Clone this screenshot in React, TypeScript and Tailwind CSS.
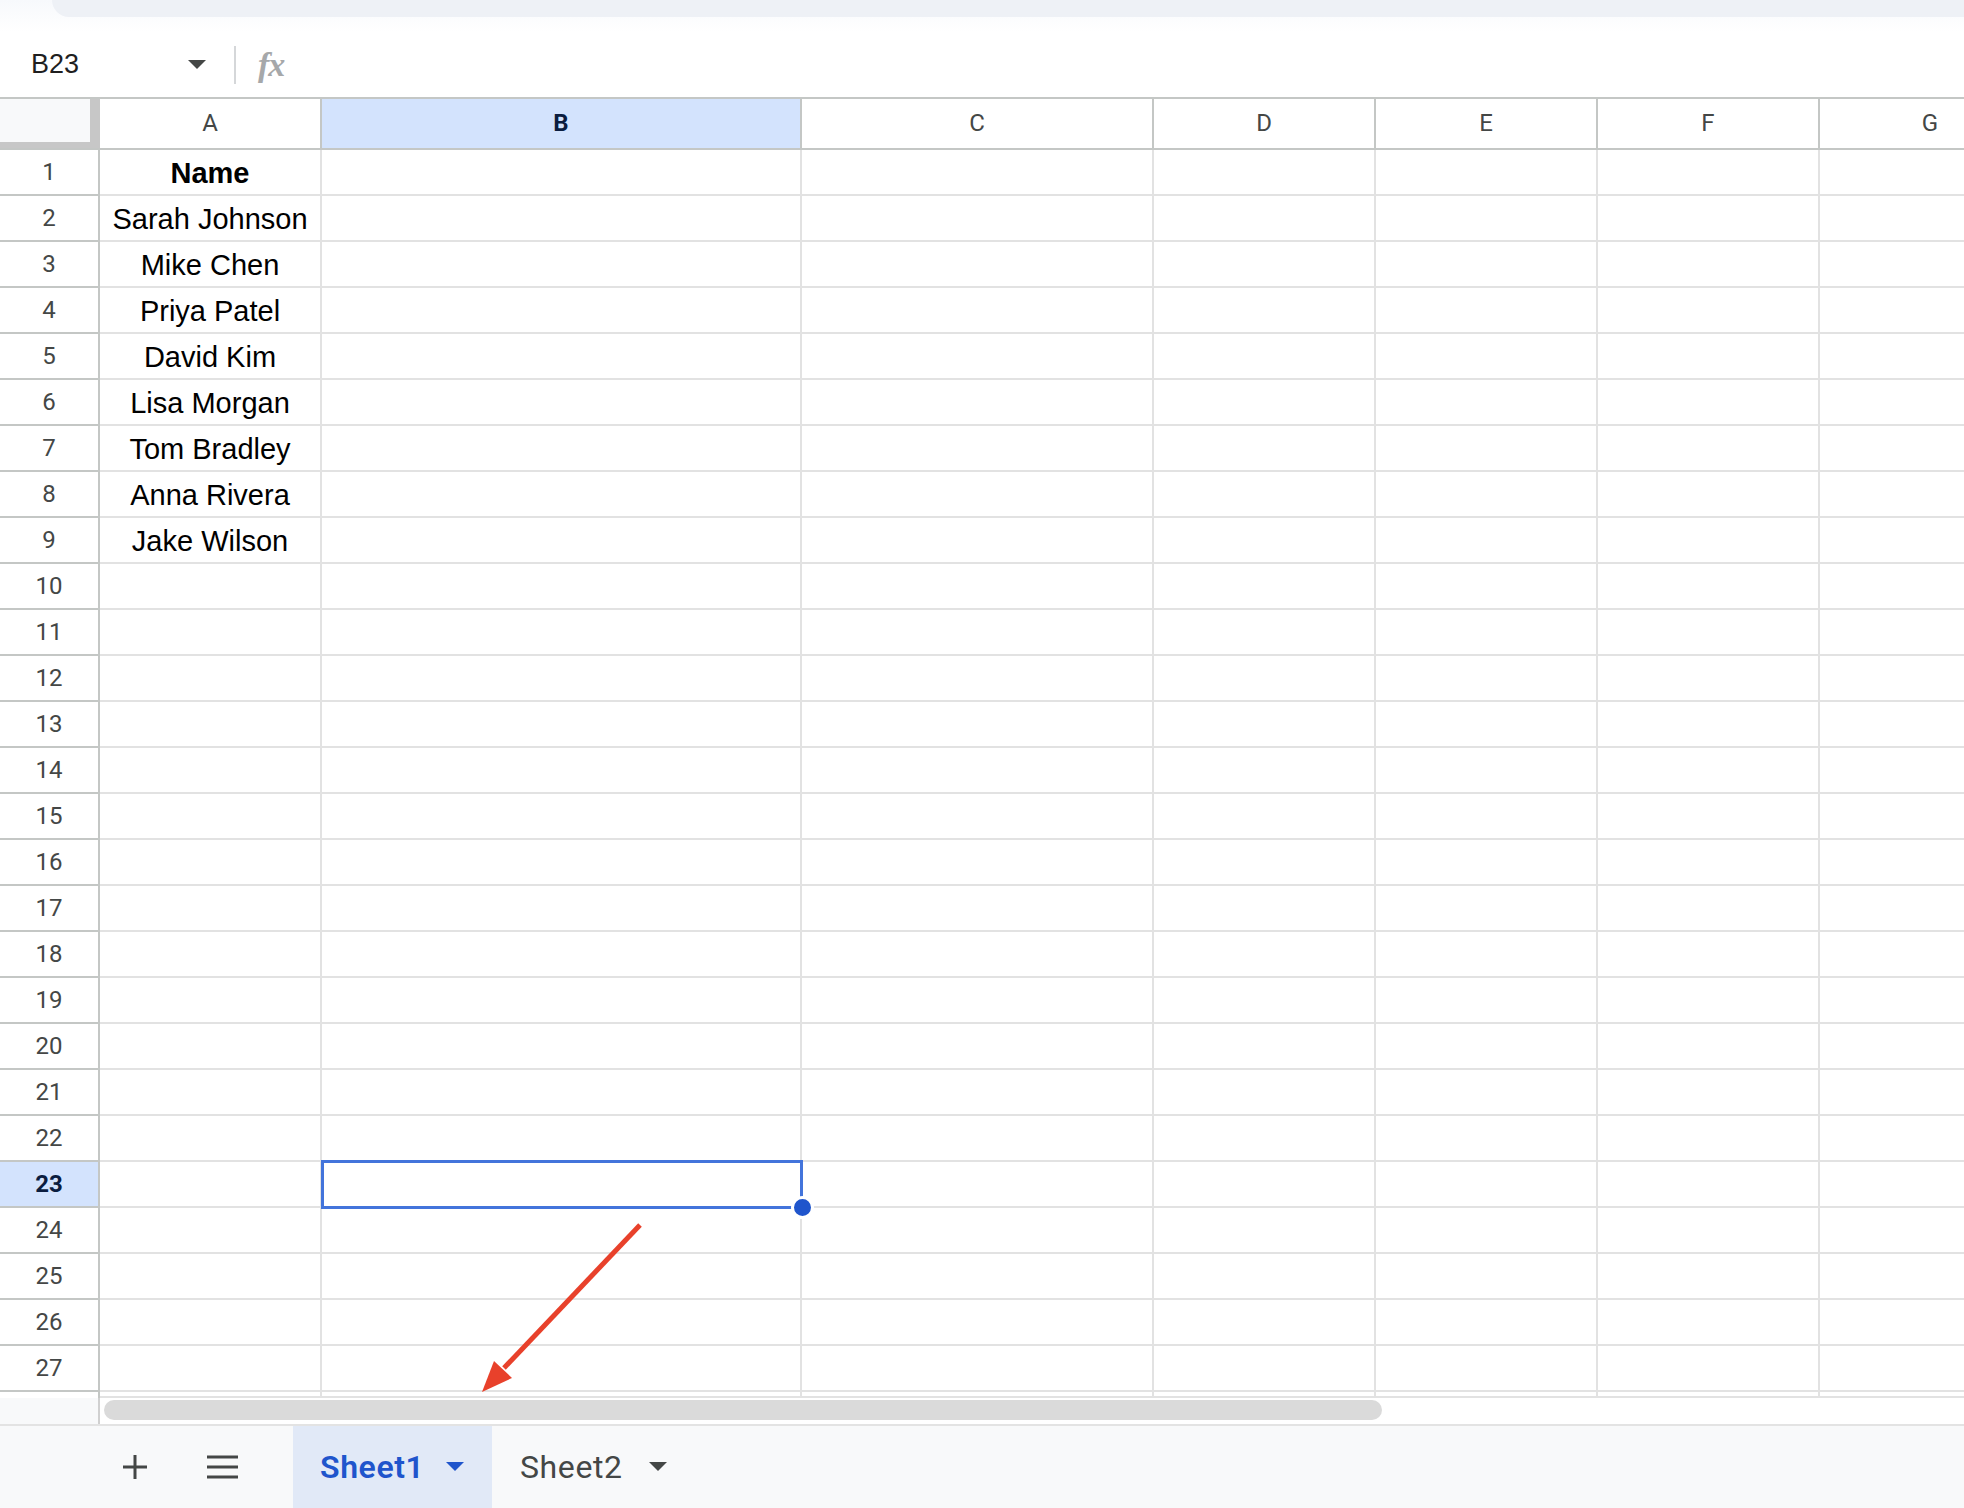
import React from "react";

const COLS = [
  { key: "A", w: "w-[222px]" },
  { key: "B", w: "w-[480px]" },
  { key: "C", w: "w-[352px]" },
  { key: "D", w: "w-[222px]" },
  { key: "E", w: "w-[222px]" },
  { key: "F", w: "w-[222px]" },
  { key: "G", w: "w-[222px]" },
];

const NAMES: Record<number, string> = {
  1: "Name",
  2: "Sarah Johnson",
  3: "Mike Chen",
  4: "Priya Patel",
  5: "David Kim",
  6: "Lisa Morgan",
  7: "Tom Bradley",
  8: "Anna Rivera",
  9: "Jake Wilson",
};

const ROWS = Array.from({ length: 27 }, (_, i) => i + 1);

function Caret({ color }: { color: string }) {
  return (
    <svg width="18" height="10" viewBox="0 0 18 10" className="shrink-0">
      <path d="M0 0 L18 0 L9 9 Z" fill={color} />
    </svg>
  );
}

export default function App() {
  return (
    <div
      className="relative w-[1964px] h-[1508px] overflow-hidden bg-white"
      style={{ fontFamily: "Roboto, 'Liberation Sans', sans-serif" }}
    >
      {/* top strip */}
      <div className="h-[32px] bg-gradient-to-b from-[#f7f9fc] to-white">
        <div className="h-[17px] ml-[52px] rounded-bl-[26px] bg-[#eef1f6]" />
      </div>

      {/* formula bar */}
      <div className="h-[65px] flex items-center">
        <div className="w-[234px] flex items-center pl-[31px] pr-[28px]">
          <span className="text-[27px] text-[#1f1f1f] font-['Liberation_Sans']">B23</span>
          <div className="flex-1" />
          <Caret color="#444746" />
        </div>
        <div className="w-[2px] h-[38px] bg-[#d5d7d9]" />
        <span className="ml-[22px] text-[34px] italic text-[#a6a8aa] font-['Liberation_Serif'] tracking-[-1px] font-bold">
          fx
        </span>
      </div>

      {/* column header row */}
      <div className="flex h-[53px] border-t-2 border-b-2 border-[#c4c7c5] box-border">
        <div className="w-[100px] shrink-0 h-full bg-[#c7c7c7]">
          <div className="w-[90px] h-[43px] bg-[#f8f9fa]" />
        </div>
        {COLS.map((c) => (
          <div
            key={c.key}
            className={`${c.w} shrink-0 h-full border-r-2 border-[#c4c7c5] flex items-center justify-center pb-[1px] text-[24px] ${
              c.key === "B" ? "bg-[#d3e3fd] text-[#0b1d3f] font-bold" : "text-[#444746]"
            }`}
          >
            {c.key}
          </div>
        ))}
      </div>

      {/* rows */}
      {ROWS.map((r) => (
        <div key={r} className="flex h-[46px]">
          <div
            className={`w-[100px] shrink-0 h-full border-r-2 border-b-2 border-[#c4c7c5] flex items-center justify-center text-[24px] ${
              r === 23 ? "bg-[#d3e3fd] text-[#0b1d3f] font-bold" : "bg-white text-[#444746]"
            }`}
          >
            {r}
          </div>
          {COLS.map((c) => (
            <div
              key={c.key}
              className={`${c.w} shrink-0 h-full border-r-2 border-b-2 border-[#e2e2e2] relative flex items-center justify-center pt-[3px] text-[29px] text-black font-['Liberation_Sans'] ${
                r === 1 && c.key === "A" ? "font-bold" : ""
              }`}
            >
              {c.key === "A" ? NAMES[r] ?? "" : ""}
              {r === 23 && c.key === "B" && (
                <>
                  <div className="absolute z-10 -top-[2px] -left-[1px] w-[482px] h-[49px] border-[3px] border-[#4374db]" />
                  <div className="absolute z-20 left-[469px] top-[34px] w-[23px] h-[23px] rounded-full bg-[#1f55cc] border-[3px] border-white" />
                </>
              )}
            </div>
          ))}
        </div>
      ))}

      {/* partial row */}
      <div className="flex h-[6px]">
        <div className="w-[100px] shrink-0 h-full border-r-2 border-[#c4c7c5]" />
        {COLS.map((c) => (
          <div key={c.key} className={`${c.w} shrink-0 h-full border-r-2 border-b-2 border-[#e2e2e2]`} />
        ))}
      </div>

      {/* scrollbar row */}
      <div className="flex h-[28px] border-b-2 border-[#e3e3e3]">
        <div className="w-[100px] shrink-0 h-full bg-[#f8f9fa] border-r-2 border-[#d0d0d0]" />
        <div className="flex-1 pt-[2px] pl-[4px]">
          <div className="w-[1278px] h-[20px] rounded-full bg-[#dadada]" />
        </div>
      </div>

      {/* sheet tabs bar */}
      <div className="h-[82px] bg-[#f8f9fa] flex items-stretch">
        <div className="w-[122px] shrink-0" />
        <div className="w-[26px] flex items-center justify-center">
          <svg width="24" height="24" viewBox="0 0 24 24">
            <path d="M12 0 V24 M0 12 H24" stroke="#444746" strokeWidth="3" />
          </svg>
        </div>
        <div className="w-[59px] shrink-0" />
        <div className="w-[31px] flex items-center justify-center">
          <svg width="31" height="24" viewBox="0 0 31 24">
            <path d="M0 2 H31 M0 12 H31 M0 22 H31" stroke="#444746" strokeWidth="3" />
          </svg>
        </div>
        <div className="w-[55px] shrink-0" />
        <div className="w-[199px] shrink-0 bg-[#e1e9f7] flex items-center pl-[27px]">
          <span className="text-[32px] font-semibold text-[#1f55cc] tracking-[0.6px]">Sheet1</span>
          <div className="ml-[22px]">
            <Caret color="#1f55cc" />
          </div>
        </div>
        <div className="flex items-center pl-[28px]">
          <span className="text-[32px] text-[#444746] tracking-[0.6px]">Sheet2</span>
          <div className="ml-[26px]">
            <Caret color="#444746" />
          </div>
        </div>
      </div>

      {/* red annotation arrow */}
      <svg
        className="absolute left-0 top-0 pointer-events-none z-30"
        width="1964"
        height="1508"
        viewBox="0 0 1964 1508"
      >
        <line x1="640" y1="1225" x2="504" y2="1368" stroke="#e8412b" strokeWidth="5" />
        <polygon points="482,1392 512,1378 494,1361" fill="#e8412b" />
      </svg>
    </div>
  );
}
